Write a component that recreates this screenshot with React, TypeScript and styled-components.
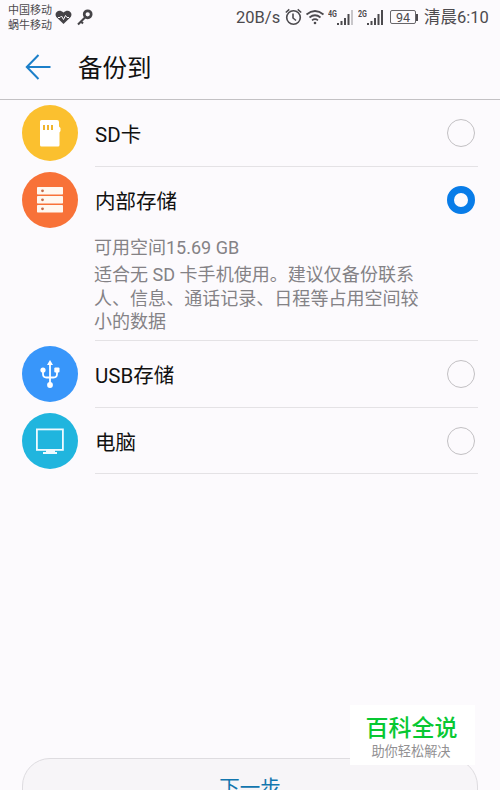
import React from "react";
import styled, { createGlobalStyle } from "styled-components";

const GlobalStyle = createGlobalStyle`
  * { box-sizing: border-box; }
  html, body { margin: 0; padding: 0; background: #fcfafd; overflow: hidden; }
`;

const Screen = styled.div`
  width: 500px;
  height: 790px;
  overflow: hidden;
  position: relative;
  display: flex;
  flex-direction: column;
  background: #fcfafd;
  color: #111;
  font-family: Roboto, "Noto Sans CJK SC", sans-serif;
  white-space: nowrap;
`;

const StatusBar = styled.header`
  height: 34px;
  flex: none;
  display: flex;
  align-items: center;
  padding: 0 11px 0 8px;
  color: #4c4a4e;
`;

const Carriers = styled.div`
  width: 47px;
  font-size: 11px;
  line-height: 15px;
  padding-top: 1px;
`;

const Notices = styled.div`
  flex: 1;
  display: flex;
  align-items: center;
  gap: 5px;
`;

const Speed = styled.span`
  width: 49px;
  padding-top: 1px;
  font-size: 16.5px;
  line-height: 33px;
`;

const Signals = styled.div`
  display: flex;
  align-items: center;
  width: 139px;
`;

const Signal = styled.div<{ $width: number }>`
  display: flex;
  width: ${(p) => p.$width}px;
  height: 17px;
`;

const Generation = styled.span`
  width: 9px;
  font-size: 9.5px;
  font-weight: 700;
  line-height: 9px;
  transform: scaleX(0.75);
  transform-origin: left;
`;

const Battery = styled.span`
  width: 26px;
  height: 14px;
  border: 1px solid #68666a;
  border-radius: 2px;
  font-size: 12.5px;
  line-height: 13px;
  text-align: center;
`;

const BatteryTip = styled.span`
  width: 2px;
  height: 7px;
  background: #4c4a4e;
`;

const Clock = styled.time`
  width: 65px;
  padding-top: 1px;
  font-size: 16.5px;
  line-height: 33px;
`;

const TitleBar = styled.div`
  height: 66px;
  flex: none;
  display: flex;
  align-items: center;
  padding: 0 25px;
  gap: 27px;
  border-bottom: 1px solid #c3c1c4;
`;

const Title = styled.h1`
  margin: 0;
  padding-top: 4px;
  font-size: 24.5px;
  font-weight: 400;
  line-height: 60px;
`;

const BackButton = styled.button`
  display: flex;
  border: 0;
  padding: 0;
  background: none;
`;

const Options = styled.main`
  flex: none;
  padding: 0 22px;
`;

const Option = styled.section<{ $height: number }>`
  display: flex;
  height: ${(p) => p.$height}px;
  gap: 17px;
`;

const Badge = styled.div<{ $color: string }>`
  width: 56px;
  height: 56px;
  flex: none;
  margin-top: 5px;
  border-radius: 50%;
  background: ${(p) => p.$color};
`;

const OptionBody = styled.div`
  flex: 1;
  border-bottom: 1px solid #e4e2e5;
`;

const OptionHead = styled.div`
  height: 66px;
  display: flex;
  align-items: center;
  justify-content: space-between;
  padding-right: 3px;
`;

const Label = styled.span`
  font-size: 20.5px;
  line-height: 30px;
  padding-top: 4px;
`;

const Radio = styled.span<{ $checked: boolean }>`
  width: 28px;
  height: 28px;
  border-radius: 50%;
  border: ${(p) => (p.$checked ? "7px solid #087ce8" : "1.5px solid #c2c0c3")};
`;

const Space = styled.p`
  margin: 3px 0 3px -1px;
  font-size: 18px;
  line-height: 24px;
  color: #848286;
`;

const Description = styled(Space)`
  margin: 0 0 0 -1px;
  font-size: 18.05px;
  line-height: 23.5px;
`;

const NextButton = styled.button`
  width: 456px;
  height: 60px;
  flex: none;
  margin: 284px 22px 0;
  padding: 0;
  border: 1px solid #dedce0;
  border-radius: 28px;
  background: #f7f5f8;
  color: #1276ae;
  font: 400 20.5px/30px Roboto, "Noto Sans CJK SC", sans-serif;
`;

const Brand = styled.aside`
  position: absolute;
  left: 350px;
  top: 705px;
  width: 125px;
  height: 60px;
  padding-top: 8px;
  background: #fff;
  text-align: center;
`;

const BrandName = styled.div`
  color: #08c832;
  font-size: 23px;
  line-height: 32px;
  font-weight: 500;
  padding-right: 2px;
`;

const BrandLine = styled.div`
  color: #929092;
  font-size: 13.2px;
  line-height: 14px;
  padding-right: 3px;
`;

const SdIcon = () => (
  <svg width="56" height="56" viewBox="0 0 56 56">
    <path d="M19.500 15H35q2 0 2 2v4.500l1.500 1.500v3l-1 1.500V40q0 1.500-1.500 1.500H19.500q-1.500 0-1.500-1.500V16.500q0-1.500 1.500-1.500z" fill="#fff" />
    <path d="M22 20v5M26 20v5M30 20v5" stroke="#efb52e" strokeWidth="2" />
  </svg>
);

const StorageIcon = () => (
  <svg width="56" height="56" viewBox="0 0 56 56">
    {[15, 24, 33].map((y) => (
      <g key={y}>
        <rect x="15" y={y} width="26" height="7.500" rx=".7" fill="#fff8f0" />
        <circle cx="20.500" cy={y + 3.800} r="1.400" fill="#c36b48" />
      </g>
    ))}
  </svg>
);

const UsbIcon = () => (
  <svg width="56" height="56" viewBox="0 0 56 56" fill="none" stroke="#fff" strokeWidth="1.800">
    <path d="M28 17v22M21 25v3q0 3.500 3.500 3.500h7q3.500 0 3.500-3.500v-3" />
    <path d="M25 19l3-5 3 5z" fill="#fff" stroke="none" />
    <g fill="#fff" stroke="none">
      <circle cx="21" cy="24" r="2.600" />
      <rect x="32.300" y="21.400" width="5.200" height="5.200" rx="1" />
      <circle cx="28" cy="39" r="2.900" />
    </g>
  </svg>
);

const ComputerIcon = () => (
  <svg width="56" height="56" viewBox="0 0 56 56">
    <rect x="14.900" y="16.400" width="26" height="20.500" fill="none" stroke="#eefaff" strokeWidth="1.800" />
    <path d="M24 37h9v2h2v2H21v-2h3z" fill="#eefaff" />
  </svg>
);

const HeartIcon = () => (
  <svg width="17" height="15" viewBox="0 0 17 15">
    <path d="M8.500 14L1.300 7C-1.500 2.500 4-2 8.500 2.500 13-2 18.500 2.500 15.700 7z" fill="#454347" />
    <path d="M3 7.500h2l1.500-1.500 2 3.500 2-4 1.500 2h2" fill="none" stroke="#fcfafd" strokeWidth="1" />
  </svg>
);

const KeyIcon = () => (
  <svg width="16" height="17" viewBox="0 0 16 17" fill="none" stroke="#454347">
    <circle cx="10.700" cy="5.300" r="3.500" strokeWidth="2.700" />
    <path d="M8 8.500L1 15.500M3.500 12l2.500 2.500" strokeWidth="2.100" />
  </svg>
);

const AlarmIcon = () => (
  <svg width="17" height="18" viewBox="0 0 17 18" fill="none" stroke="#4c4a4e" strokeWidth="1.600">
    <circle cx="8.500" cy="9.500" r="6.800" />
    <path d="M8 5.500v4.500l3 2.500M.8 4.500L4.300 1.300M12.700 1.300L16.200 4.500" />
  </svg>
);

const WifiSvg = styled.svg`
  margin: 0 3px;
`;

const WifiIcon = () => (
  <WifiSvg width="20" height="16" viewBox="0 0 20 16" fill="none" stroke="#4c4a4e" strokeWidth="1.700">
    <path d="M1.500 5.500q8.500-7 17 0M4.500 8.500q5.500-4.500 11 0M7 11.300q3-2.300 6 0" />
    <circle cx="10" cy="14" r="1.300" fill="#4c4a4e" stroke="none" />
  </WifiSvg>
);

const BarsIcon = ({ pale = false }: { pale?: boolean }) => (
  <svg width="17" height="17" viewBox="0 0 17 17" fill="#4c4a4e">
    <path d="M0 14h2v2H0zM3.500 12h2v4h-2zM7 9h2v7H7zM10.500 5h2v11h-2z" />
    <path d="M14 1h2v15h-2z" fill={pale ? "#c8c6ca" : "#4c4a4e"} />
  </svg>
);

const options = [
  { label: "SD卡", color: "#fbc02f", height: 67, icon: <SdIcon /> },
  {
    label: "内部存储",
    color: "#f87238",
    height: 174,
    icon: <StorageIcon />,
    checked: true,
    space: "可用空间15.69 GB",
    lines: ["适合无 SD 卡手机使用。建议仅备份联系", "人、信息、通话记录、日程等占用空间较", "小的数据"],
  },
  { label: "USB存储", color: "#3896fa", height: 67, icon: <UsbIcon /> },
  { label: "电脑", color: "#20b5de", height: 66, icon: <ComputerIcon /> },
];

export default function App() {
  return (
    <>
      <GlobalStyle />
      <Screen>
        <StatusBar>
          <Carriers>
            <div>中国移动</div>
            <div>蜗牛移动</div>
          </Carriers>
          <Notices>
            <HeartIcon />
            <KeyIcon />
          </Notices>
          <Speed>20B/s</Speed>
          <Signals>
            <AlarmIcon />
            <WifiIcon />
            <Signal $width={30}>
              <Generation>4G</Generation>
              <BarsIcon pale />
            </Signal>
            <Signal $width={32}>
              <Generation>2G</Generation>
              <BarsIcon />
            </Signal>
            <Battery>94</Battery>
            <BatteryTip />
          </Signals>
          <Clock>清晨6:10</Clock>
        </StatusBar>
        <TitleBar>
          <BackButton aria-label="返回">
            <svg width="26" height="26" viewBox="0 0 26 26" fill="none" stroke="#1c7fc9" strokeWidth="2">
              <path d="M13.500 1L1.800 13l11.700 12M2 13h23.500" />
            </svg>
          </BackButton>
          <Title>备份到</Title>
        </TitleBar>
        <Options>
          {options.map((o) => (
            <Option key={o.label} $height={o.height}>
              <Badge $color={o.color}>{o.icon}</Badge>
              <OptionBody>
                <OptionHead>
                  <Label>{o.label}</Label>
                  <Radio $checked={!!o.checked} />
                </OptionHead>
                {o.space && <Space>{o.space}</Space>}
                {o.lines?.map((line) => (
                  <Description key={line}>{line}</Description>
                ))}
              </OptionBody>
            </Option>
          ))}
        </Options>
        <NextButton>下一步</NextButton>
        <Brand>
          <BrandName>百科全说</BrandName>
          <BrandLine>助你轻松解决</BrandLine>
        </Brand>
      </Screen>
    </>
  );
}
